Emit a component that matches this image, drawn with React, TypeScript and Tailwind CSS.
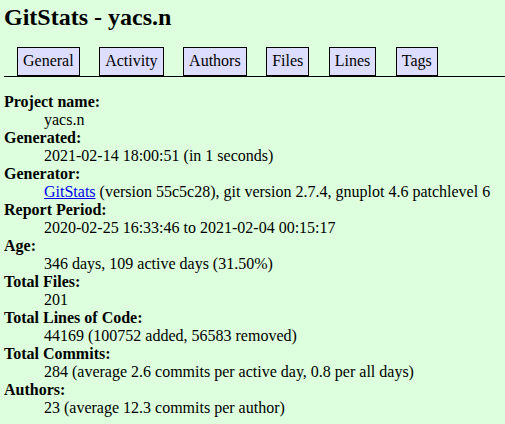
const tabs = ["General", "Activity", "Authors", "Files", "Lines", "Tags"];

const rows: { label: string; value: React.ReactNode }[] = [
  { label: "Project name", value: "yacs.n" },
  { label: "Generated", value: "2021-02-14 18:00:51 (in 1 seconds)" },
  {
    label: "Generator",
    value: (
      <>
        <a href="#" className="text-[#0000ee] underline">
          GitStats
        </a>{" "}
        (version 55c5c28), git version 2.7.4, gnuplot 4.6 patchlevel 6
      </>
    ),
  },
  { label: "Report Period", value: "2020-02-25 16:33:46 to 2021-02-04 00:15:17" },
  { label: "Age", value: "346 days, 109 active days (31.50%)" },
  { label: "Total Files", value: "201" },
  { label: "Total Lines of Code", value: "44169 (100752 added, 56583 removed)" },
  { label: "Total Commits", value: "284 (average 2.6 commits per active day, 0.8 per all days)" },
  { label: "Authors", value: "23 (average 12.3 commits per author)" },
];

export default function App() {
  return (
    <div className="min-h-screen bg-[#ddffdd] pl-1 pt-1 font-['Liberation_Serif',serif] text-black">
      <h1 className="text-[24px] font-bold leading-[27px]">GitStats - yacs.n</h1>

      <div className="mt-4 flex gap-[19.5px] border-b border-black pl-[13px]">
        {tabs.map((tab) => (
          <a
            key={tab}
            href="#"
            className="block border border-black bg-[#ddddff] px-[5px] pt-1 pb-[5px] text-[16px] leading-[18px] text-black"
          >
            {tab}
          </a>
        ))}
      </div>

      <dl className="mt-4 text-[16px] leading-[18px]">
        {rows.map((row) => (
          <div key={row.label}>
            <dt className="font-bold">{row.label}:</dt>
            <dd className="ml-10 whitespace-nowrap">{row.value}</dd>
          </div>
        ))}
      </dl>
    </div>
  );
}
